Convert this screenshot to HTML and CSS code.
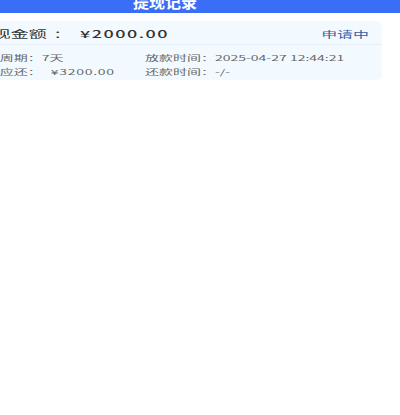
FILE: index.html
```html
<!DOCTYPE html>
<html lang="zh-CN">
<head>
<meta charset="utf-8">
<title>提现记录</title>
<link rel="stylesheet" href="styles.css">
</head>
<body>
<div class="page">
  <header class="topbar"><h1 class="title">提现记录</h1></header>
  <section class="card">
    <div class="card-head">
      <div class="amount-line"><span class="amount-label">提现金额</span><span class="amount-colon">：</span><span class="amount">¥2000.00</span></div>
      <span class="status">申请中</span>
    </div>
    <div class="card-body">
      <div class="info-row">
        <div class="col-left"><span>借款周期：</span><span>7天</span></div>
        <div class="col-right"><span>放款时间：</span><span>2025-04-27 12:44:21</span></div>
      </div>
      <div class="info-row">
        <div class="col-left"><span>到期应还：</span><span class="money">¥3200.00</span></div>
        <div class="col-right"><span>还款时间：</span><span>-/-</span></div>
      </div>
    </div>
  </section>
</div>
</body>
</html>
```
FILE: styles.css
```css
html, body {
  margin: 0;
  padding: 0;
  background: #ffffff;
  overflow: hidden;
}
* { box-sizing: border-box; }
.page {
  width: 240px;
  transform: translateX(-40px) scaleX(1.85);
  transform-origin: 0 0;
  font-family: "Noto Sans CJK SC", "Noto Sans", sans-serif;
}
.topbar {
  height: 13px;
  background: #3b6ef6;
  overflow: hidden;
  padding: 0.7px 18.4px 0 0;
  text-align: center;
}
.title {
  margin: 0;
  font-size: 8.65px;
  line-height: 8.65px;
  font-weight: 700;
  color: #ffffff;
  transform: scaleY(1.85);
  transform-origin: 50% 100%;
}
.card {
  margin: 8px 12.4px 0 4px;
  background: #f3faff;
  border-radius: 3px;
}
.card-head {
  height: 24px;
  padding: 2px 6.5px 0 4px;
  display: flex;
  align-items: center;
  justify-content: space-between;
  border-bottom: 1px solid #e6eef7;
}
.amount-line {
  display: flex;
  align-items: center;
  color: #333333;
}
.amount-label {
  font-size: 9.73px;
}
.amount-colon {
  font-size: 9.73px;
  margin-left: 3.5px;
}
.amount {
  font-size: 9.73px;
  letter-spacing: 0.8px;
  margin-left: 4.8px;
  font-weight: 500;
}
.status {
  font-size: 8.65px;
  color: #3a62a8;
}
.card-body {
  padding: 5.5px 6.5px 1.5px 2.4px;
}
.info-row {
  display: flex;
  height: 14px;
  line-height: 14px;
  font-size: 7.57px;
  color: #666666;
  white-space: nowrap;
}
.col-left {
  width: 93.6px;
}
.money {
  margin-left: 4.8px;
  letter-spacing: 0.4px;
}
```
